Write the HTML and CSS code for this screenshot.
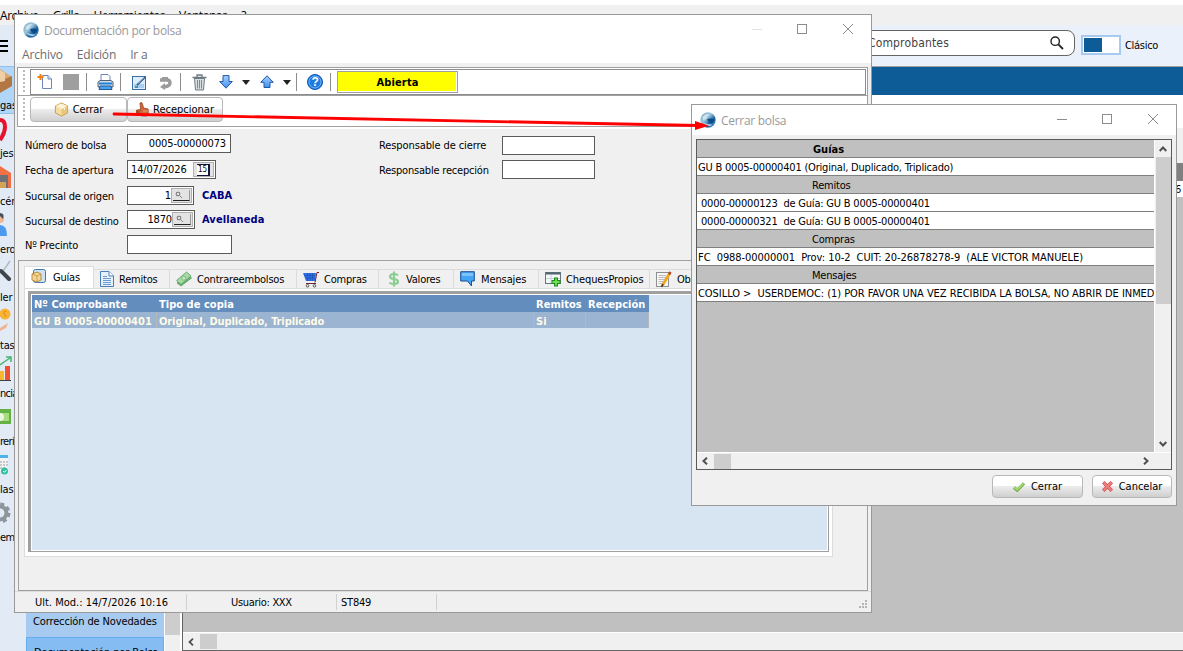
FILE: index.html
```html
<!DOCTYPE html>
<html lang="es">
<head>
  <meta charset="UTF-8" />
  <meta name="viewport" content="width=device-width, initial-scale=1.0"/>
  <title>Documentación por bolsa</title>
  <link rel="stylesheet" href="styles.css">
</head>
<body>
  <!-- shared symbols -->
  <svg class="defs" width="0" height="0">
    <defs>
      <linearGradient id="globeFill" x1="0" y1="0" x2="1" y2="1">
        <stop offset="0" stop-color="#86b0c6"/>
        <stop offset="0.4" stop-color="#9cc5dc"/>
        <stop offset="0.65" stop-color="#1c5f9c"/>
        <stop offset="1" stop-color="#5a9ccb"/>
      </linearGradient>
      <linearGradient id="blueFill" x1="0" y1="0" x2="0" y2="1">
        <stop offset="0" stop-color="#a9d2ff"/>
        <stop offset="1" stop-color="#3f8ff0"/>
      </linearGradient>
      <symbol id="globe" viewBox="0 0 16 16">
        <circle cx="8" cy="8" r="7.7" fill="url(#globeFill)"/>
        <path d="M2.500 5Q5 1.500 9 2Q8 4 7 5Q6 8 3 8Z" fill="#dcebf4" opacity=".8"/>
        <path d="M7 7.500Q10 5.500 14.500 7.500Q14 11 11 11.500Q8 10 7 7.500Z" fill="#0a4c8a"/>
        <path d="M3 10.500Q8 16.500 12.500 12.500Q8 13 3 10.500Z" fill="#b5dcf0"/>
      </symbol>
      <symbol id="box" viewBox="0 0 16 16">
        <path d="M8 1L14.5 4.2V11.6L8 15L1.5 11.6V4.2Z" fill="#f5dc9f" stroke="#c39a48"/>
        <path d="M8 1.500L14 4.3L8 7.600L2 4.300Z" fill="#fdf2d2"/>
        <path d="M8 7.6L14 4.7V11.3L8 14.5Z" fill="#e8c67c"/>
        <path d="M5 2.9L11 6V8.5" stroke="#fffaf0" fill="none"/>
      </symbol>
    </defs>
  </svg>

  <div class="app">
    <div class="app-menu">
      <span>Archivo</span><span>Grilla</span><span>Herramientas</span><span>Ventanas</span><span>?</span>
    </div>

    <div class="app-body">
      <div class="sidebar">
        <div class="burger"><i></i><i></i><i></i></div>
        <div class="side-item selected">
          <svg width="15" height="26" viewBox="0 0 15 26"><path d="M0 1L12 9L0 14Z" fill="#dba871"/><path d="M0 13L12 8V18L0 25Z" fill="#b37743"/><path d="M0 2L5 5V13L0 14Z" fill="#efd0a6"/></svg>
          <span>gas</span>
        </div>
        <div class="side-item">
          <svg width="15" height="26" viewBox="0 0 15 26"><path d="M0 4Q5 4 5 11Q5 17 0 24" fill="none" stroke="#e8112d" stroke-width="4"/></svg>
          <span>jes</span>
        </div>
        <div class="side-item">
          <svg width="15" height="26" viewBox="0 0 15 26"><path d="M0 2L11 9V24H0Z" fill="#ee7044"/><path d="M0 11H8V24H0Z" fill="#6d7076"/><path d="M0 18H6V24H0Z" fill="#d5a257"/></svg>
          <span>cén</span>
        </div>
        <div class="side-item">
          <svg width="15" height="26" viewBox="0 0 15 26"><circle cx="0" cy="7" r="4" fill="#f2b591"/><path d="M0 1Q5 1 3 7L0 4Z" fill="#4a5058"/><path d="M0 13Q7 13 7 24H0Z" fill="#4a9bf0"/></svg>
          <span>ero</span>
        </div>
        <div class="side-item">
          <svg width="15" height="26" viewBox="0 0 15 26"><path d="M1 14L10 1" stroke="#b5b9bd" stroke-width="1.5"/><path d="M1 11L9 19" stroke="#41454c" stroke-width="4" stroke-linecap="round"/></svg>
          <span>ler</span>
        </div>
        <div class="side-item">
          <svg width="15" height="26" viewBox="0 0 15 26"><circle cx="5" cy="6" r="5.5" fill="#f9b233"/><path d="M6 3Q3 3 4 6Q7 7 5 9" stroke="#d98b10" fill="none"/><path d="M0 20L8 15L6 20L0 23Z" fill="#f3b191"/></svg>
          <span>tas</span>
        </div>
        <div class="side-item">
          <svg width="15" height="26" viewBox="0 0 15 26"><path d="M0 9L4 6L10 2M6 1H11V6" stroke="#43b56c" fill="none" stroke-width="1.5"/><path d="M0 15H4V24H0Z" fill="#fbb72c"/><path d="M5 10H10V24H5Z" fill="#f1502f"/><path d="M0 24.5H11" stroke="#3b3f44"/></svg>
          <span class="tight">ncia</span>
        </div>
        <div class="side-item">
          <svg width="15" height="26" viewBox="0 0 15 26"><path d="M0 5H11V20H0Z" fill="#64b245"/><path d="M0 9H9V17H0Z" fill="#a7dc7f"/><path d="M0 9Q4 9 4 13Q4 17 0 17Z" fill="#e8f7de"/></svg>
          <span class="tight">rerí</span>
        </div>
        <div class="side-item">
          <svg width="15" height="26" viewBox="0 0 15 26"><path d="M0 4H8V19H0Z" fill="#f3f3f3"/><path d="M0 3H8V6H0Z" fill="#4bb3ee"/><path d="M1 9V18M4 9V18M7 9V15" stroke="#b0b3b5" stroke-width="1.3" stroke-dasharray="2 1"/><circle cx="4.5" cy="19" r="3.5" fill="#2fc0a0"/><path d="M3 19L4.300 20.300L6.500 18" stroke="#fff" fill="none"/></svg>
          <span>las</span>
        </div>
        <div class="side-item">
          <svg width="15" height="26" viewBox="0 0 15 26"><circle cx="0" cy="13" r="6.500" fill="none" stroke="#8f969b" stroke-width="4"/><circle cx="0" cy="13" r="9" fill="none" stroke="#8f969b" stroke-width="3" stroke-dasharray="4 3.070"/></svg>
          <span class="tight">ema</span>
        </div>
      </div>

      <div class="tree">
        <div class="tree-list">
          <div class="tree-item">Corrección de Novedades</div>
          <div class="tree-item current">Documentación por Bolsa</div>
        </div>
        <div class="tree-scroll"><i></i></div>
      </div>

      <div class="workspace">
        <div class="searchbar">
          <div class="search">
            <span>Comprobantes</span>
            <svg width="14" height="14" viewBox="0 0 14 14"><circle cx="5.200" cy="5.200" r="4.200" fill="none" stroke="#222" stroke-width="1.400"/><path d="M8.300 8.300L13 13" stroke="#222" stroke-width="1.800"/></svg>
          </div>
          <div class="switch"><i></i></div>
          <span class="switch-label">Clásico</span>
        </div>
        <div class="blue-band"></div>
        <div class="white-band"></div>
        <div class="grid-top"></div>
        <div class="grid-head"></div>
        <div class="grid-line">6</div>
        <div class="grid-empty"></div>
        <div class="grid-hscroll">
          <svg width="6" height="8" viewBox="0 0 6 8"><path d="M5 .7L1.500 4L5 7.300" fill="none" stroke="#505050" stroke-width="1.800"/></svg>
          <i></i>
        </div>
      </div>
    </div>
  </div>

  <div class="window main-window">
    <div class="titlebar">
      <svg width="16" height="16"><use href="#globe"/></svg>
      <span class="caption">Documentación por bolsa</span>
      <svg class="win-buttons" width="104" height="12" viewBox="0 0 104 12">
        <path d="M0 5.500H10" stroke="#e3e3e3"/>
        <rect x="45.500" y=".5" width="9" height="9" fill="none" stroke="#8c8c8c"/>
        <path d="M91 0L101 10M101 0L91 10" stroke="#8c8c8c"/>
      </svg>
    </div>
    <div class="menubar"><span>Archivo</span><span>Edición</span><span>Ir a</span></div>

    <div class="toolbars">
      <div class="bar">
        <div class="grip"></div>
        <div class="tools">
          <svg class="t-new" width="16" height="18" viewBox="0 0 16 18"><path d="M5.500 2.500H11L14.500 6V15.500H5.500Z" fill="#fdfdff" stroke="#7186b4"/><path d="M11 2.500V6H14.500" fill="#dce5f5" stroke="#7186b4"/><path d="M3.500 1V7M.5 4H6.500" stroke="#f08010" stroke-width="2"/></svg>
          <i class="stop"></i>
          <i class="sep"></i>
          <svg class="t-print" width="17" height="18" viewBox="0 0 17 18"><path d="M4 8V1.500H11L13 3.500V8" fill="#fff" stroke="#6f87b0"/><path d="M1 9L3 7.500H14L16 9V14H1Z" fill="#d4dbe3" stroke="#4e6177"/><path d="M2 10.500H15" stroke="#1883e4" stroke-width="2"/><path d="M3 13H14L15 16.500H2Z" fill="#4aa3f2" stroke="#24578f"/></svg>
          <i class="sep"></i>
          <svg class="t-edit" width="15" height="15" viewBox="0 0 15 15"><rect x=".5" y="1.500" width="13" height="13" fill="#dceefb" stroke="#3b6fa3"/><path d="M2 9H12V13H2Z" fill="#a5cdee"/><path d="M5 10L13 2" stroke="#315e8e" stroke-width="2"/><path d="M6 8.500L12 2" stroke="#e7f2fa" stroke-width=".8"/><path d="M3 12H6" stroke="#203a55"/></svg>
          <svg class="t-undo" width="14" height="15" viewBox="0 0 14 15"><path d="M1 5H8Q11 5 11 8Q11 11 5 12" fill="none" stroke="#9b9b9b" stroke-width="3.500"/><path d="M6 8L1 12L6 15Z" fill="#9b9b9b"/><path d="M3 2H9V5H3Z" fill="#9b9b9b"/></svg>
          <i class="sep"></i>
          <svg class="t-trash" width="15" height="17" viewBox="0 0 15 17"><path d="M2.500 4.500H12.500L11.500 16H3.500Z" fill="#d9dee1" stroke="#6e7a82"/><path d="M.5 3.500H14.500M5 3V1H10V3" fill="none" stroke="#6e7a82" stroke-width="1.300"/><path d="M5.500 6V14.500M7.500 6V14.500M9.500 6V14.500" stroke="#7f8b92"/></svg>
          <svg class="t-down" width="14" height="14" viewBox="0 0 14 14"><path d="M4 .6H10V6.500H13.300L7 13.200L.7 6.500H4Z" fill="url(#blueFill)" stroke="#2158a8"/></svg>
          <i class="caret"></i>
          <svg class="t-up" width="14" height="14" viewBox="0 0 14 14"><path d="M7 .8L13.300 7.300H10V12.500H4V7.300H.7Z" fill="url(#blueFill)" stroke="#2158a8"/></svg>
          <i class="caret"></i>
          <i class="sep"></i>
          <svg class="t-help" width="16" height="16" viewBox="0 0 16 16"><circle cx="8" cy="8" r="7.500" fill="#1d7ae2" stroke="#0d55b0"/><circle cx="8" cy="8" r="6" fill="none" stroke="#8cc2f7" stroke-width=".8"/><text x="8" y="12.200" text-anchor="middle" class="help-mark">?</text></svg>
          <i class="sep"></i>
          <div class="state">Abierta</div>
        </div>
      </div>
      <div class="bar second">
        <div class="grip"></div>
        <button class="btn btn-close-bag"><svg width="15" height="15"><use href="#box"/></svg><span>Cerrar</span></button>
        <button class="btn btn-receive"><svg width="14" height="15" viewBox="0 0 14 15"><path d="M4 1Q6 -.5 6.500 2L7.500 6L12 7Q13 11 11 14H6L3 13L4.500 7Z" fill="#cf6a3a" stroke="#97401c" stroke-width=".8"/><path d="M0 8L4 7L3 14H0Z" fill="#a94d25"/><path d="M7 9H12M7 11.500H12" stroke="#f1a77c" stroke-width=".8"/></svg><span>Recepcionar</span></button>
      </div>
    </div>

    <div class="form">
      <div class="form-col left">
        <div class="row r1"><label>Número de bolsa</label><div class="field w104">0005-00000073</div></div>
        <div class="row r2"><label class="wide">Fecha de apertura</label><div class="field w89 date">14/07/2026<span class="cal"><b>15</b></span></div></div>
        <div class="row r3"><label>Sucursal de origen</label><div class="field w67 look">1<span class="lens"><i></i></span></div><strong>CABA</strong></div>
        <div class="row r4"><label>Sucursal de destino</label><div class="field w68 look">1870<span class="lens"><i></i></span></div><strong>Avellaneda</strong></div>
        <div class="row r5"><label>Nº Precinto</label><div class="field w105"></div></div>
      </div>
      <div class="form-col right">
        <div class="row q1"><label class="wide">Responsable de cierre</label><div class="field w93"></div></div>
        <div class="row q2"><label>Responsable recepción</label><div class="field w93"></div></div>
      </div>
    </div>

    <div class="panel">
      <div class="tabs">
        <div class="tab active tb1"><svg width="16" height="16" viewBox="0 0 16 16"><rect x="2.500" y=".5" width="12" height="13" rx="2" fill="#cfe2f3" stroke="#3f76ad"/><path d="M1 5L6 3L10 5V11L6 13L1 11Z" fill="#f2d595" stroke="#b98b3c"/><path d="M1 5L6 7L10 5M6 7V13" stroke="#b98b3c" fill="none" stroke-width=".7"/></svg><span>Guías</span></div>
        <div class="tab tb2"><svg width="14" height="16" viewBox="0 0 14 16"><path d="M.5 .5H9L13.500 5V15.500H.5Z" fill="#e6f0fb" stroke="#4a7ebb"/><path d="M9 .5V5H13.500" fill="#fff" stroke="#4a7ebb"/><path d="M3 7.500H11M3 9.500H11M3 11.500H11M3 13.500H11M3 5.500H7" stroke="#6c9bd2"/></svg><span>Remitos</span></div>
        <div class="tab tb3"><svg width="16" height="16" viewBox="0 0 16 16"><path d="M1 12L12 4L15.500 7L5 15Z" fill="#6fb574" stroke="#4b9452" stroke-width=".7"/><path d="M.5 9.500L10.500 1L15 5L5 13.500Z" fill="#a9d9a6" stroke="#559e5b" stroke-width=".8"/><circle cx="7.800" cy="7.200" r="2" fill="#c9e8c5" stroke="#63a968" stroke-width=".7"/></svg><span>Contrareembolsos</span></div>
        <div class="tab tb4"><svg width="16" height="17" viewBox="0 0 16 17"><path d="M0 2H13L12 10H3Z" fill="#2f6fe0"/><path d="M1 4.500H12.500M2 7H12.500M4.500 2V10M7 2V10M9.500 2V10" stroke="#1c50bb" stroke-width=".6"/><path d="M12 11.500L14 1.500H16M3 12.500H13" stroke="#6c2630" fill="none"/><circle cx="4.500" cy="14.800" r="1.300" fill="none" stroke="#555"/><circle cx="11.500" cy="14.800" r="1.300" fill="none" stroke="#555"/></svg><span>Compras</span></div>
        <div class="tab tb5"><svg width="12" height="16" viewBox="0 0 12 16"><path d="M10 4.500Q9 3 6 3Q2 3 2 5.500Q2 7.500 6 8Q10 8.500 10 10.800Q10 13 6 13Q2.500 13 1.500 11.500M6 .5V15.500" fill="none" stroke="#8ccb94" stroke-width="2.200"/></svg><span>Valores</span></div>
        <div class="tab tb6"><svg width="15" height="16" viewBox="0 0 15 16"><path d="M.7 .7H14.300V10H11.500V15L7.500 10H.7Z" fill="#45a5f5" stroke="#1a4f94"/><path d="M2 2H13V5H2Z" fill="#7cc2fb"/></svg><span>Mensajes</span></div>
        <div class="tab tb7"><svg width="16" height="16" viewBox="0 0 16 16"><rect x=".5" y="1.500" width="15" height="11" fill="#f5f8f9" stroke="#66757d"/><path d="M1 2.500H15" stroke="#53656e" stroke-width="2"/><path d="M1 7.500H15M6 4V12" stroke="#c9d2d6"/><path d="M11 6.500V15.500M6.500 11H15.500" stroke="#1e8b22" stroke-width="4"/><path d="M11 7.500V14.500M7.500 11H14.500" stroke="#6ee052" stroke-width="1.800"/></svg><span>ChequesPropios</span></div>
        <div class="tab tb8"><svg width="16" height="17" viewBox="0 0 16 17"><rect x=".5" y="1.500" width="12" height="14" fill="#f6f6f6" stroke="#8f8f8f"/><path d="M2.500 4.500H10M2.500 6.500H10M2.500 8.500H9M2.500 10.500H8M2.500 12.500H7" stroke="#bcbcbc"/><path d="M6 15L13.500 2.500" stroke="#f2a71b" stroke-width="2.800"/><path d="M5.500 16L7 13" stroke="#4a3618" stroke-width="1.500"/><path d="M13 3.500L14.500 1" stroke="#b44a2c" stroke-width="2.500"/></svg><span>Observaciones</span></div>
      </div>
      <div class="page">
        <div class="grid">
          <div class="g-row g-head"><span>Nº Comprobante</span><span>Tipo de copia</span><span>Remitos</span><span>Recepción</span></div>
          <div class="g-row g-sel"><span>GU B 0005-00000401</span><span class="copy">Original, Duplicado, Triplicado</span><span>Si</span><span></span></div>
        </div>
      </div>
    </div>

    <div class="statusbar">
      <span class="s1">Ult. Mod.: 14/7/2026 10:16</span>
      <span class="s2">Usuario: XXX</span>
      <span class="s3">ST849</span>
      <svg class="sizer" width="9" height="9" viewBox="0 0 9 9"><path d="M6 1H8M6 4H8M3 4H5M6 7H8M3 7H5M0 7H2" stroke="#b4b4b4" stroke-width="2"/></svg>
    </div>
  </div>

  <div class="window dialog">
    <div class="titlebar">
      <svg width="16" height="16"><use href="#globe"/></svg>
      <span class="caption">Cerrar bolsa</span>
      <svg class="win-buttons" width="104" height="12" viewBox="0 0 104 12">
        <path d="M0 5.500H10" stroke="#8c8c8c"/>
        <rect x="45.500" y=".5" width="9" height="9" fill="none" stroke="#8c8c8c"/>
        <path d="M91 0L101 10M101 0L91 10" stroke="#8c8c8c"/>
      </svg>
    </div>
    <div class="list">
      <div class="list-main">
        <div class="rows">
          <div class="l-head bold">Guías</div>
          <div class="l-row">GU B 0005-00000401 (Original, Duplicado, Triplicado)</div>
          <div class="l-head">Remitos</div>
          <div class="l-row sub">0000-00000123&nbsp; de Guía: GU B 0005-00000401</div>
          <div class="l-row sub">0000-00000321&nbsp; de Guía: GU B 0005-00000401</div>
          <div class="l-head">Compras</div>
          <div class="l-row fc">FC&nbsp; 0988-00000001&nbsp; Prov: 10-2&nbsp; CUIT: 20-26878278-9&nbsp; (ALE VICTOR MANUELE)</div>
          <div class="l-head">Mensajes</div>
          <div class="l-row msg">COSILLO &gt;&nbsp; USERDEMOC: (1) POR FAVOR UNA VEZ RECIBIDA LA BOLSA, NO ABRIR DE INMED</div>
        </div>
        <div class="vscroll">
          <svg width="8" height="6" viewBox="0 0 8 6"><path d="M.7 5L4 1.500L7.300 5" fill="none" stroke="#505050" stroke-width="2"/></svg>
          <i></i>
          <svg class="end" width="8" height="6" viewBox="0 0 8 6"><path d="M.7 1L4 4.500L7.300 1" fill="none" stroke="#505050" stroke-width="2"/></svg>
        </div>
      </div>
      <div class="hscroll">
        <svg width="6" height="8" viewBox="0 0 6 8"><path d="M5 .7L1.500 4L5 7.300" fill="none" stroke="#505050" stroke-width="2"/></svg>
        <i></i>
        <svg class="end" width="6" height="8" viewBox="0 0 6 8"><path d="M1 .7L4.500 4L1 7.300" fill="none" stroke="#505050" stroke-width="2"/></svg>
      </div>
    </div>
    <div class="actions">
      <button class="btn btn-ok"><svg width="12" height="10" viewBox="0 0 12 10"><path d="M1 5.500L4.200 8.300L11 1.300" fill="none" stroke="#6ca441" stroke-width="3"/><path d="M1.500 5.500L4.200 7.800L10.500 1.500" fill="none" stroke="#a5dc70" stroke-width="1.800"/></svg><span>Cerrar</span></button>
      <button class="btn btn-cancel"><svg width="11" height="11" viewBox="0 0 11 11"><path d="M1.200 1.200L9.800 9.800M9.800 1.200L1.200 9.800" stroke="#cf5352" stroke-width="3.400"/><path d="M1.500 1.500L9.500 9.500M9.500 1.500L1.500 9.500" stroke="#f07f7c" stroke-width="1.800"/></svg><span>Cancelar</span></button>
    </div>
  </div>

  <svg class="arrow" width="600" height="24" viewBox="0 0 600 24">
    <path d="M2 4L586 15.500" stroke="#ff0000" stroke-width="2.800" stroke-linecap="round"/>
    <path d="M583 11L597 15.700L583 20Z" fill="#ff0000"/>
  </svg>
</body>
</html>
```
FILE: styles.css
```css
* {
  box-sizing: border-box;
}
body {
  margin: 0;
  width: 1183px;
  height: 651px;
  overflow: hidden;
  position: relative;
  background: #fff;
  font-family: 'DejaVu Sans Condensed', 'DejaVu Sans', sans-serif;
  font-stretch: condensed;
  font-size: 11px;
  letter-spacing: -0.2px;
  color: #000;
  white-space: nowrap;
}
svg {
  display: block;
  flex: none;
}
.defs {
  position: absolute;
}

/* application behind the windows */
.app {
  height: 651px;
  padding-top: 5px;
  display: flex;
  flex-direction: column;
}
.app-menu {
  height: 20px;
  background: #f0f0f0;
  display: flex;
  gap: 14px;
  line-height: 21px;
  font-family: 'Open Sans', sans-serif;
  font-stretch: normal;
  font-size: 12px;
  letter-spacing: -0.45px;
}
.app-body {
  flex: 1;
  display: flex;
  min-height: 0;
}
.sidebar {
  width: 26px;
  background: #e2ebf5;
}
.burger {
  height: 41px;
  padding-top: 15px;
}
.burger i {
  display: block;
  width: 8px;
  height: 2px;
  margin-bottom: 3px;
  background: #000;
}
.side-item {
  height: 48px;
  padding-top: 2px;
  overflow: hidden;
}
.side-item span {
  display: block;
  margin-top: 5px;
  line-height: 14px;
}
.side-item .tight {
  letter-spacing: -0.7px;
}
.side-item.selected {
  background: #b0d6fa;
  border-top: 1px solid #8cc0f0;
  border-bottom: 1px solid #8cc0f0;
  padding-top: 1px;
}
.tree {
  width: 156px;
  padding-top: 580px;
  display: flex;
  background: #fff;
}
.tree-list {
  width: 138px;
}
.tree-item {
  height: 32px;
  padding-left: 7px;
  line-height: 33px;
  background: #a6caf0;
  letter-spacing: -0.13px;
}
.tree-item.current {
  background: #85bdf2;
  border: 1px solid #64aef2;
  line-height: 30px;
}
.tree-scroll {
  margin-left: 1px;
  width: 15px;
  background: #f0f0f0;
}
.tree-scroll i {
  display: block;
  height: 30px;
  background: #cdcdcd;
}
.workspace {
  flex: 1;
  border-left: 1px solid #646464;
  display: flex;
  flex-direction: column;
}
.searchbar {
  height: 42px;
  background: #eaf1fa;
  border-bottom: 1px solid #a0a0a0;
  display: flex;
  padding-left: 617px;
}
.search {
  width: 275px;
  height: 26px;
  margin-top: 5px;
  border: 1px solid #646464;
  border-radius: 8px;
  background: #fff;
  display: flex;
  align-items: center;
  justify-content: space-between;
  padding: 0 10px 0 67px;
  font-size: 12px;
  letter-spacing: 0.15px;
  color: #444;
}
.switch {
  width: 40px;
  height: 20px;
  margin: 10px 4px 0 6px;
  border: 2px solid #a6caf0;
  background: #fff;
  padding: 1px;
}
.switch i {
  display: block;
  width: 18px;
  height: 14px;
  background: #0d5c97;
}
.switch-label {
  line-height: 42px;
  letter-spacing: -0.3px;
}
.blue-band {
  height: 28px;
  background: #0d5c97;
}
.white-band {
  height: 33px;
  background: #fff;
}
.grid-top {
  height: 35px;
  background: #f0f0f0;
}
.grid-head {
  height: 18px;
  background: #808080;
}
.grid-line {
  height: 16px;
  line-height: 18px;
  background: #fff;
  text-align: right;
  padding-right: 2px;
}
.grid-empty {
  flex: 1;
  background: #c0c0c0;
}
.grid-hscroll {
  height: 19px;
  background: #f0f0f0;
  border-top: 1px solid #fff;
  border-bottom: 1px solid #646464;
  display: flex;
  align-items: center;
  padding-left: 5px;
}
.grid-hscroll i {
  width: 17px;
  height: 15px;
  margin-left: 6px;
  background: #cdcdcd;
}

/* windows */
.window {
  position: absolute;
  background: #f0f0f0;
  border: 1px solid #999;
  display: flex;
  flex-direction: column;
}
.main-window {
  left: 14px;
  top: 14px;
  width: 858px;
  height: 599px;
}
.titlebar {
  height: 30px;
  background: #fff;
  display: flex;
  align-items: center;
  padding: 0 15px 0 8px;
  font-family: 'Open Sans', sans-serif;
  font-stretch: normal;
  font-size: 12px;
  letter-spacing: -0.3px;
  color: #999;
}
.caption {
  margin-left: 5px;
}
.win-buttons {
  margin-left: auto;
}
.menubar {
  height: 18px;
  background: #fff;
  display: flex;
  gap: 14px;
  padding-left: 7px;
  line-height: 20px;
  font-family: 'Open Sans', sans-serif;
  font-stretch: normal;
  font-size: 12px;
  letter-spacing: -0.15px;
  color: #6d6d6d;
}
.toolbars {
  margin: 4px 3px 0 2px;
  height: 60px;
  border: 1px solid #a0a0a0;
  background: #fff;
}
.bar {
  height: 28px;
  padding: 1px 1px 0 5px;
  display: flex;
  border-bottom: 1px solid #a0a0a0;
}
.bar.second {
  border: 0;
  height: 30px;
}
.grip {
  width: 2px;
  height: 24px;
  margin-top: 1px;
  background: repeating-linear-gradient(#bbb 0 2px, transparent 2px 4px);
}
.tools {
  flex: 1;
  height: 26px;
  margin-left: 5px;
  border: 1px solid #8c8c8c;
  display: flex;
  align-items: center;
}
.sep {
  width: 1px;
  height: 18px;
  background: #8c8c8c;
}
.t-new {
  margin-left: 6px;
}
.stop {
  width: 16px;
  height: 16px;
  margin: 0 7px 0 10px;
  background: #9f9f9f;
}
.t-print {
  margin: 0 6px 0 10px;
}
.t-edit {
  margin: 0 12px 0 11px;
}
.t-undo {
  margin-right: 7px;
}
.t-trash {
  margin: 0 12px 0 11px;
}
.caret {
  margin: 0 10px 0 9px;
  border: 4px solid transparent;
  border-top: 5px solid #222;
  border-bottom: 0;
}
.t-up + .caret {
  margin-right: 5px;
}
.t-help {
  margin: 0 7px 0 10px;
}
.help-mark {
  font: bold 12px 'Liberation Sans', sans-serif;
  fill: #fff;
}
.state {
  width: 121px;
  height: 22px;
  margin-left: 6px;
  background: #ffff00;
  border: 1px solid #a0a0a0;
  box-shadow: inset -1px -1px #fff;
  text-align: center;
  font-weight: bold;
  line-height: 21px;
  letter-spacing: 0.15px;
}
.btn {
  font: inherit;
  letter-spacing: -0.1px;
  color: #000;
  display: flex;
  align-items: center;
  justify-content: center;
  padding: 0;
  border: 1px solid #b8b8b8;
  border-radius: 4px;
  background: linear-gradient(#fff 45%, #ececec 50%, #cfcfcf);
}
.btn-close-bag {
  margin-left: 5px;
  width: 97px;
  height: 25px;
  gap: 4px;
}
.btn-receive {
  width: 96px;
  height: 25px;
  gap: 3px;
  letter-spacing: 0;
}
.form {
  height: 133px;
  margin-left: 2px;
  border-top: 2px solid #fff;
  display: flex;
}
.form-col {
  padding: 5px 0 0 8px;
  width: 354px;
}
.form-col.right {
  padding-top: 7px;
}
.row {
  height: 19px;
  display: flex;
  align-items: center;
}
.row label {
  width: 102px;
  padding-top: 3px;
}
.row label.wide {
  letter-spacing: -0.1px;
}
.r2 label, .r3 label, .r5 label {
  padding-top: 1px;
}
.right .row label {
  width: 123px;
}
.right .q1 label {
  padding: 0 0 1px;
}
.right .q2 label {
  padding-top: 2px;
}
.r2, .r3 {
  margin-top: 7px;
}
.r4, .q2 {
  margin-top: 5px;
}
.r5 {
  margin-top: 6px;
}
.row strong {
  margin-left: 8px;
  color: #00007f;
  letter-spacing: 0;
}
.r4 strong {
  margin-left: 7px;
  letter-spacing: 0.1px;
}
.field {
  height: 19px;
  border: 1px solid #5a5a5a;
  background: #fff;
  display: flex;
  align-items: center;
  justify-content: flex-end;
  padding-right: 4px;
  letter-spacing: -0.15px;
}
.field.date {
  justify-content: space-between;
  padding: 0 1px 0 3px;
}
.field.look {
  padding-right: 1px;
}
.w104 {
  width: 104px;
}
.w89 {
  width: 89px;
}
.w67 {
  width: 67px;
}
.w68 {
  width: 68px;
}
.w105 {
  width: 105px;
}
.w93 {
  width: 93px;
}
.cal {
  width: 21px;
  height: 15px;
  background: #e3e3e3;
  border: 1px solid #b0b0b0;
  display: flex;
  align-items: center;
  justify-content: center;
}
.cal b {
  width: 13px;
  height: 12px;
  background: #fff;
  border: 1px solid #15153c;
  border-width: 1px 2px 1px 0;
  font-size: 8px;
  font-weight: normal;
  letter-spacing: 0;
  line-height: 10px;
  text-align: center;
}
.lens {
  width: 21px;
  height: 15px;
  background: #e3e3e3;
  border: 1px solid #b0b0b0;
  padding: 1px;
}
.lens i {
  display: block;
  height: 11px;
  border-bottom: 1px solid #222;
  border-right: 1px solid #999;
  background:
    radial-gradient(circle at 5px 4px, transparent 1.3px, #888 1.4px 2.4px, transparent 2.6px),
    linear-gradient(45deg, transparent 45%, #888 45% 60%, transparent 60%) 6px 5px / 3px 3px no-repeat;
}

/* tabs and grid */
.panel {
  height: 331px;
  margin: 0 3px 0 3px;
  border: 1px solid #a0a0a0;
  padding: 5px 0 0 5px;
}
.tabs {
  height: 22px;
  display: flex;
  align-items: flex-end;
  overflow: hidden;
}
.tab {
  height: 19px;
  border: 1px solid #dcdcdc;
  border-left: 0;
  border-bottom: 0;
  display: flex;
  align-items: center;
  padding-left: 6px;
  flex: none;
}
.tab span {
  margin-left: 5px;
  padding-top: 1px;
}
.tab.active {
  height: 22px;
  padding-bottom: 2px;
  background: #fff;
  border-left: 1px solid #dcdcdc;
}
.tab.active span {
  margin-left: 6px;
}
.tb1 {
  width: 70px;
}
.tb2 {
  width: 76px;
}
.tb3 {
  width: 127px;
}
.tb4 {
  width: 82px;
}
.tb5 {
  width: 75px;
}
.tb6 {
  width: 85px;
  letter-spacing: -0.1px;
}
.tb7 {
  width: 111px;
  letter-spacing: -0.1px;
}
.tb8 {
  width: 100px;
}
.tb5 {
  padding-left: 9px;
}
.tb5 span {
  margin-left: 6px;
}
.tb6 span {
  margin-left: 6px;
}
.page {
  width: 809px;
  height: 269px;
  background: #fff;
  border: 1px solid #dcdcdc;
  padding: 2px 3px 4px 3px;
}
.grid {
  height: 261px;
  border: 3px solid #a0a0a0;
  border-right: 1px solid #a0a0a0;
  border-bottom: 1px solid #a0a0a0;
  background: #d7e4f2;
  box-shadow: inset 0 0 0 1px #fff;
  padding: 1px;
}
.g-row {
  display: grid;
  grid-template-columns: 125px 377px 52px 63px;
  width: 617px;
  height: 17px;
  line-height: 19px;
  font-weight: bold;
  letter-spacing: 0.03px;
  color: #fff;
}
.g-row span {
  padding-left: 2px;
}
.g-head {
  background: #638dbd;
}
.g-sel {
  height: 16px;
  background: #9ab4d1;
  color: #fffbe6;
}
.g-sel span {
  height: 16px;
  border-right: 1px solid #b3b8bd;
}
.g-sel .copy {
  letter-spacing: -0.1px;
}
.statusbar {
  height: 20px;
  border-top: 1px solid #dcdcdc;
  display: flex;
  align-items: center;
}
.statusbar span {
  height: 16px;
  line-height: 17px;
  border-right: 1px solid #d0d0d0;
}
.s1 {
  width: 172px;
  padding-left: 20px;
  letter-spacing: 0;
}
.s2 {
  width: 150px;
  padding-left: 44px;
  letter-spacing: -0.3px;
}
.s3 {
  width: 100px;
  padding-left: 4px;
}
.sizer {
  margin: 6px 3px 0 auto;
}

/* closing dialog */
.dialog {
  left: 691px;
  top: 104px;
  width: 486px;
  height: 402px;
}
.list {
  margin: 4px 4px 0 4px;
  height: 331px;
  border: 1px solid #5a5a5a;
  display: flex;
  flex-direction: column;
}
.list-main {
  height: 312px;
  display: flex;
}
.rows {
  flex: 1;
  min-width: 0;
  background: #c0c0c0;
}
.rows div {
  height: 18px;
  line-height: 19px;
  border-bottom: 1px solid #808080;
  overflow: hidden;
}
.l-head {
  padding-left: 115px;
}
.l-head.bold {
  padding-left: 116px;
  font-weight: bold;
  letter-spacing: 0;
}
.l-row {
  background: #fff;
  padding-left: 1px;
}
.l-row.sub {
  padding-left: 4px;
}
.l-row.fc {
  letter-spacing: -0.06px;
}
.l-row.msg {
  letter-spacing: -0.05px;
}
.vscroll {
  width: 17px;
  border-left: 1px solid #fff;
  background: #f0f0f0;
  display: flex;
  flex-direction: column;
  align-items: center;
  padding-top: 6px;
}
.vscroll i {
  width: 15px;
  height: 147px;
  margin-top: 5px;
  background: #cdcdcd;
}
.vscroll .end {
  margin: auto 0 5px;
}
.hscroll {
  height: 17px;
  border-top: 1px solid #fff;
  background: #f0f0f0;
  display: flex;
  align-items: center;
  padding: 0 22px 0 5px;
}
.hscroll i {
  width: 17px;
  height: 15px;
  margin-left: 6px;
  background: #cdcdcd;
}
.hscroll .end {
  margin-left: auto;
}
.actions {
  display: flex;
  justify-content: flex-end;
  gap: 9px;
  padding: 5px 4px 0 0;
}
.actions .btn {
  height: 23px;
  gap: 6px;
  letter-spacing: 0;
}
.btn-ok {
  width: 91px;
}
.btn-cancel {
  width: 80px;
}

.arrow {
  position: absolute;
  left: 112px;
  top: 110px;
}
```
